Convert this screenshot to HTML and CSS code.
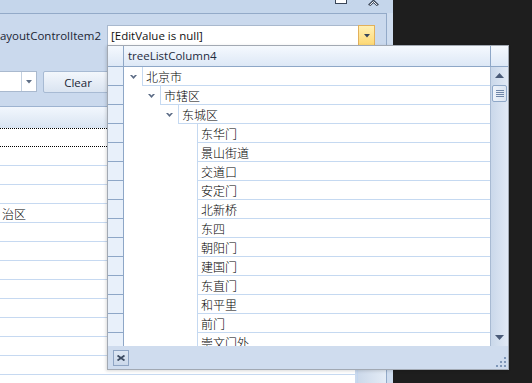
FILE: index.html
```html
<!DOCTYPE html>
<html>
<head>
<meta charset="utf-8">
<link rel="stylesheet" href="styles.css">
</head>
<body>
<div class="window">
  <div class="titlebar">
    <svg class="tb-min" width="12" height="5" viewBox="0 0 12 5"><rect x="0.5" y="-1" width="11" height="4.5" fill="#fff" stroke="#3a4658"/></svg>
    <svg class="tb-collapse" width="11" height="6" viewBox="0 0 11 6"><path d="M1 5.5 L5.5 1.2 L10 5.5" fill="none" stroke="#3a4658" stroke-width="2.6"/><path d="M1.6 5.2 L5.5 1.6 L9.4 5.2" fill="none" stroke="#fff" stroke-width="1"/></svg>
  </div>
  <div class="main">
    <div class="group">
      <div class="item-row">
        <div class="item-label"><span>LayoutControlItem2</span></div>
        <div class="edit">
          <span class="edit-text">[EditValue is null]</span>
          <span class="edit-btn"><svg width="6" height="4" viewBox="0 0 6 4"><path d="M0 0 H6 L3 3.5 Z" fill="#35445a"/></svg></span>
        </div>
      </div>
      <div class="tool-row">
        <div class="combo">
          <span class="combo-text"></span>
          <span class="combo-btn"><svg width="6" height="4" viewBox="0 0 6 4"><path d="M0 0 H6 L3 3.5 Z" fill="#5e6e86"/></svg></span>
        </div>
        <button class="btn">Clear</button>
      </div>
      <div class="grid-wrap">
        <div class="grid">
          <div class="grid-header"></div>
          <div class="grid-row focused"></div>
          <div class="grid-row"></div>
          <div class="grid-row"></div>
          <div class="grid-row"></div>
          <div class="grid-row">治区</div>
          <div class="grid-row"></div>
          <div class="grid-row"></div>
          <div class="grid-row"></div>
          <div class="grid-row"></div>
          <div class="grid-row"></div>
          <div class="grid-row"></div>
          <div class="grid-row"></div>
          <div class="grid-row"></div>
          <div class="grid-row"></div>
        </div>
        <div class="grid-vscroll"></div>
      </div>
    </div>
    <div class="frame-right"></div>
  </div>
</div>

<div class="popup">
  <div class="pp-header">
    <div class="ind"></div>
    <div class="col-title">treeListColumn4</div>
    <div class="corner"></div>
  </div>
  <div class="pp-body">
    <div class="tree">
      <div class="node"><div class="ind"></div><div class="exp l0"><svg width="7" height="4" viewBox="0 0 7 4"><path d="M0 0 H2 L3.5 1.5 L5 0 H7 L3.5 4 Z" fill="#5a6a84"/></svg></div><div class="cell">北京市</div></div>
      <div class="node"><div class="ind"></div><div class="exp l1"><svg width="7" height="4" viewBox="0 0 7 4"><path d="M0 0 H2 L3.5 1.5 L5 0 H7 L3.5 4 Z" fill="#5a6a84"/></svg></div><div class="cell">市辖区</div></div>
      <div class="node"><div class="ind"></div><div class="exp l2"><svg width="7" height="4" viewBox="0 0 7 4"><path d="M0 0 H2 L3.5 1.5 L5 0 H7 L3.5 4 Z" fill="#5a6a84"/></svg></div><div class="cell">东城区</div></div>
      <div class="node"><div class="ind"></div><div class="exp l3"></div><div class="cell">东华门</div></div>
      <div class="node"><div class="ind"></div><div class="exp l3"></div><div class="cell">景山街道</div></div>
      <div class="node"><div class="ind"></div><div class="exp l3"></div><div class="cell">交道口</div></div>
      <div class="node"><div class="ind"></div><div class="exp l3"></div><div class="cell">安定门</div></div>
      <div class="node"><div class="ind"></div><div class="exp l3"></div><div class="cell">北新桥</div></div>
      <div class="node"><div class="ind"></div><div class="exp l3"></div><div class="cell">东四</div></div>
      <div class="node"><div class="ind"></div><div class="exp l3"></div><div class="cell">朝阳门</div></div>
      <div class="node"><div class="ind"></div><div class="exp l3"></div><div class="cell">建国门</div></div>
      <div class="node"><div class="ind"></div><div class="exp l3"></div><div class="cell">东直门</div></div>
      <div class="node"><div class="ind"></div><div class="exp l3"></div><div class="cell">和平里</div></div>
      <div class="node"><div class="ind"></div><div class="exp l3"></div><div class="cell">前门</div></div>
      <div class="node"><div class="ind"></div><div class="exp l3"></div><div class="cell">崇文门外</div></div>
    </div>
    <div class="vscroll">
      <div class="sb-btn"><svg width="9" height="5" viewBox="0 0 9 5"><path d="M0 5 H9 L4.5 0 Z" fill="#4a5b78"/></svg></div>
      <div class="sb-thumb"><svg width="8" height="7" viewBox="0 0 8 7"><path d="M0 0.5 H8 M0 2.5 H8 M0 4.5 H8 M0 6.5 H8" stroke="#6f86a8" stroke-width="1"/></svg></div>
      <div class="sb-track"></div>
      <div class="sb-btn"><svg width="9" height="5" viewBox="0 0 9 5"><path d="M0 0 H9 L4.5 5 Z" fill="#4a5b78"/></svg></div>
    </div>
  </div>
  <div class="pp-footer">
    <button class="close"><svg width="8" height="6" viewBox="0 0 8 6"><path d="M0.5 0.5 L7.5 5.5 M7.5 0.5 L0.5 5.5" stroke="#3c4b62" stroke-width="1.8"/></svg></button>
    <svg class="grip" width="10" height="10" viewBox="0 0 10 10"><g fill="#7f97b8"><rect x="8" y="0" width="2" height="2"/><rect x="4" y="4" width="2" height="2"/><rect x="8" y="4" width="2" height="2"/><rect x="0" y="8" width="2" height="2"/><rect x="4" y="8" width="2" height="2"/><rect x="8" y="8" width="2" height="2"/></g></svg>
  </div>
</div>
</body>
</html>
```

FILE: styles.css
```css
* { box-sizing: border-box; }
html, body { margin: 0; padding: 0; }
body {
  width: 532px;
  height: 383px;
  overflow: hidden;
  position: relative;
  background: #1e1e1e;
  font-family: "Open Sans", "Noto Sans CJK SC", sans-serif;
  font-size: 11.5px;
  color: #1b2535;
}

.window {
  width: 393px;
  height: 383px;
  background: #cad9ed;
  display: flex;
  flex-direction: column;
}
.titlebar {
  height: 13px;
  flex: none;
  display: flex;
  justify-content: flex-end;
  align-items: flex-start;
  padding-right: 14px;
  background: #c5d6eb;
}
.tb-min { display: block; margin-right: 21px; }
.tb-collapse { display: block; }

.main { flex: 1; display: flex; min-height: 0; }
.group {
  width: 387px;
  flex: none;
  border-top: 1px solid #93aac8;
  border-right: 1px solid #93aac8;
  display: flex;
  flex-direction: column;
  padding-top: 11px;
  min-height: 0;
}
.frame-right { flex: 1; background: #cfddef; }

.item-row { display: flex; height: 21px; flex: none; }
.item-label {
  width: 107px;
  flex: none;
  display: flex;
  justify-content: flex-end;
  align-items: center;
  padding-right: 6px;
  white-space: nowrap;
}
.edit {
  width: 268px;
  display: flex;
  border: 1px solid #a9b9ce;
  background: #fff;
}
.edit-text { flex: 1; padding-left: 3px; line-height: 19px; color: #111; white-space: nowrap; }
.edit-btn {
  width: 17px;
  margin: -1px -1px -1px 0;
  background: linear-gradient(#fff0b4, #fdd874);
  border: 1px solid #e2b05a;
  display: flex;
  align-items: center;
  justify-content: center;
}
.edit-btn svg { display: block; }

.tool-row { display: flex; margin-top: 25px; height: 21px; flex: none; }
.combo {
  width: 60px;
  margin-left: -23px;
  display: flex;
  border: 1px solid #a9b9ce;
  background: #fff;
}
.combo-text { flex: 1; }
.combo-btn {
  width: 15px;
  border-left: 1px solid #c3d0e0;
  display: flex;
  align-items: center;
  justify-content: center;
}
.combo-btn svg { display: block; }
.btn {
  margin-left: 6px;
  width: 70px;
  height: 22px;
  padding: 0;
  border: 1px solid #a7bad3;
  border-radius: 2px;
  background: linear-gradient(#f3f7fc, #dae4f1);
  font: inherit;
  color: #1b2535;
}

.grid-wrap { margin-top: 14px; flex: 1; display: flex; min-height: 0; }
.grid {
  width: 355px;
  flex: none;
  border-top: 1px solid #9db3d0;
  background: #fff;
  display: flex;
  flex-direction: column;
  overflow: hidden;
  font-family: "Noto Sans CJK SC", sans-serif;
  font-weight: 300;
  font-size: 12px;
  color: #000;
}
.grid-header {
  height: 21px;
  flex: none;
  background: linear-gradient(#f2f7fd, #d9e4f2);
}
.grid-row {
  height: 19px;
  flex: none;
  border-bottom: 1px solid #c6d9f1;
  padding: 1px 0 0 2px;
  line-height: 17px;
}
.grid-row.focused {
  border-top: 1px dotted #000;
  border-bottom: 1px dotted #000;
}
.grid-vscroll {
  flex: 1;
  margin-left: 2px;
  border-left: 1px solid #c3d6ef;
  border-top: 1px solid #9db3d0;
  background: linear-gradient(to right, #ccd9ea, #e4ecf6);
}

/* popup */
.popup {
  position: absolute;
  left: 107px;
  top: 45px;
  width: 402px;
  height: 325px;
  border: 1px solid #a2a9b3;
  background: #fff;
  display: flex;
  flex-direction: column;
  box-shadow: -1px 1px 3px rgba(0, 0, 0, 0.15);
}
.pp-header {
  height: 21px;
  flex: none;
  display: flex;
  border-bottom: 1px solid #8ea7c7;
  background: linear-gradient(#f5f9fe, #dde8f6);
}
.pp-header .ind { width: 16px; border-right: 1px solid #8ea7c7; }
.col-title { flex: 1; padding-left: 4px; line-height: 20px; color: #1e2b3e; white-space: nowrap; }
.corner { width: 18px; border-left: 1px solid #8ea7c7; }

.pp-body { height: 279px; flex: none; display: flex; }
.tree {
  flex: 1;
  overflow: hidden;
  font-family: "Noto Sans CJK SC", sans-serif;
  font-weight: 300;
  font-size: 12px;
  color: #000;
}
.node { display: flex; height: 19px; }
.node .ind {
  width: 16px;
  flex: none;
  background: #e8f0fa;
  border-right: 1px solid #8ea7c7;
  border-bottom: 1px solid #8ea7c7;
}
.exp {
  width: 18px;
  height: 18px;
  flex: none;
  display: flex;
  align-items: center;
  justify-content: center;
  padding-top: 1px;
}
.exp svg { display: block; }
.exp.l1 { margin-left: 18px; }
.exp.l2 { margin-left: 36px; }
.exp.l3 { margin-left: 55px; }
.cell {
  flex: 1;
  border-left: 1px solid #c5d9f1;
  border-bottom: 1px solid #c5d9f1;
  padding: 1px 0 0 3px;
  line-height: 17px;
  white-space: nowrap;
}

.vscroll {
  width: 18px;
  flex: none;
  border-left: 1px solid #a8bad2;
  background: linear-gradient(to right, #cad8ea, #e1e9f5);
  display: flex;
  flex-direction: column;
  align-items: center;
}
.sb-btn { height: 17px; width: 100%; display: flex; align-items: center; justify-content: center; }
.sb-btn svg { display: block; }
.sb-thumb {
  width: 15px;
  height: 17px;
  margin-top: 1px;
  border: 1px solid #8fa8c8;
  border-radius: 2px;
  background: linear-gradient(to right, #eef3fa, #dbe5f2);
  display: flex;
  align-items: center;
  justify-content: center;
}
.sb-thumb svg { display: block; }
.sb-track { flex: 1; }

.pp-footer {
  flex: 1;
  display: flex;
  align-items: center;
  padding-left: 5px;
  background: #cfdcee;
}
.close {
  width: 16px;
  height: 16px;
  padding: 0;
  border: 1px solid #8fa5c4;
  background: linear-gradient(#dde7f4, #cbd8ea);
  display: flex;
  align-items: center;
  justify-content: center;
}
.close svg { display: block; }
.grip { display: block; margin-left: auto; margin-right: 2px; align-self: flex-end; margin-bottom: 2px; }
```
